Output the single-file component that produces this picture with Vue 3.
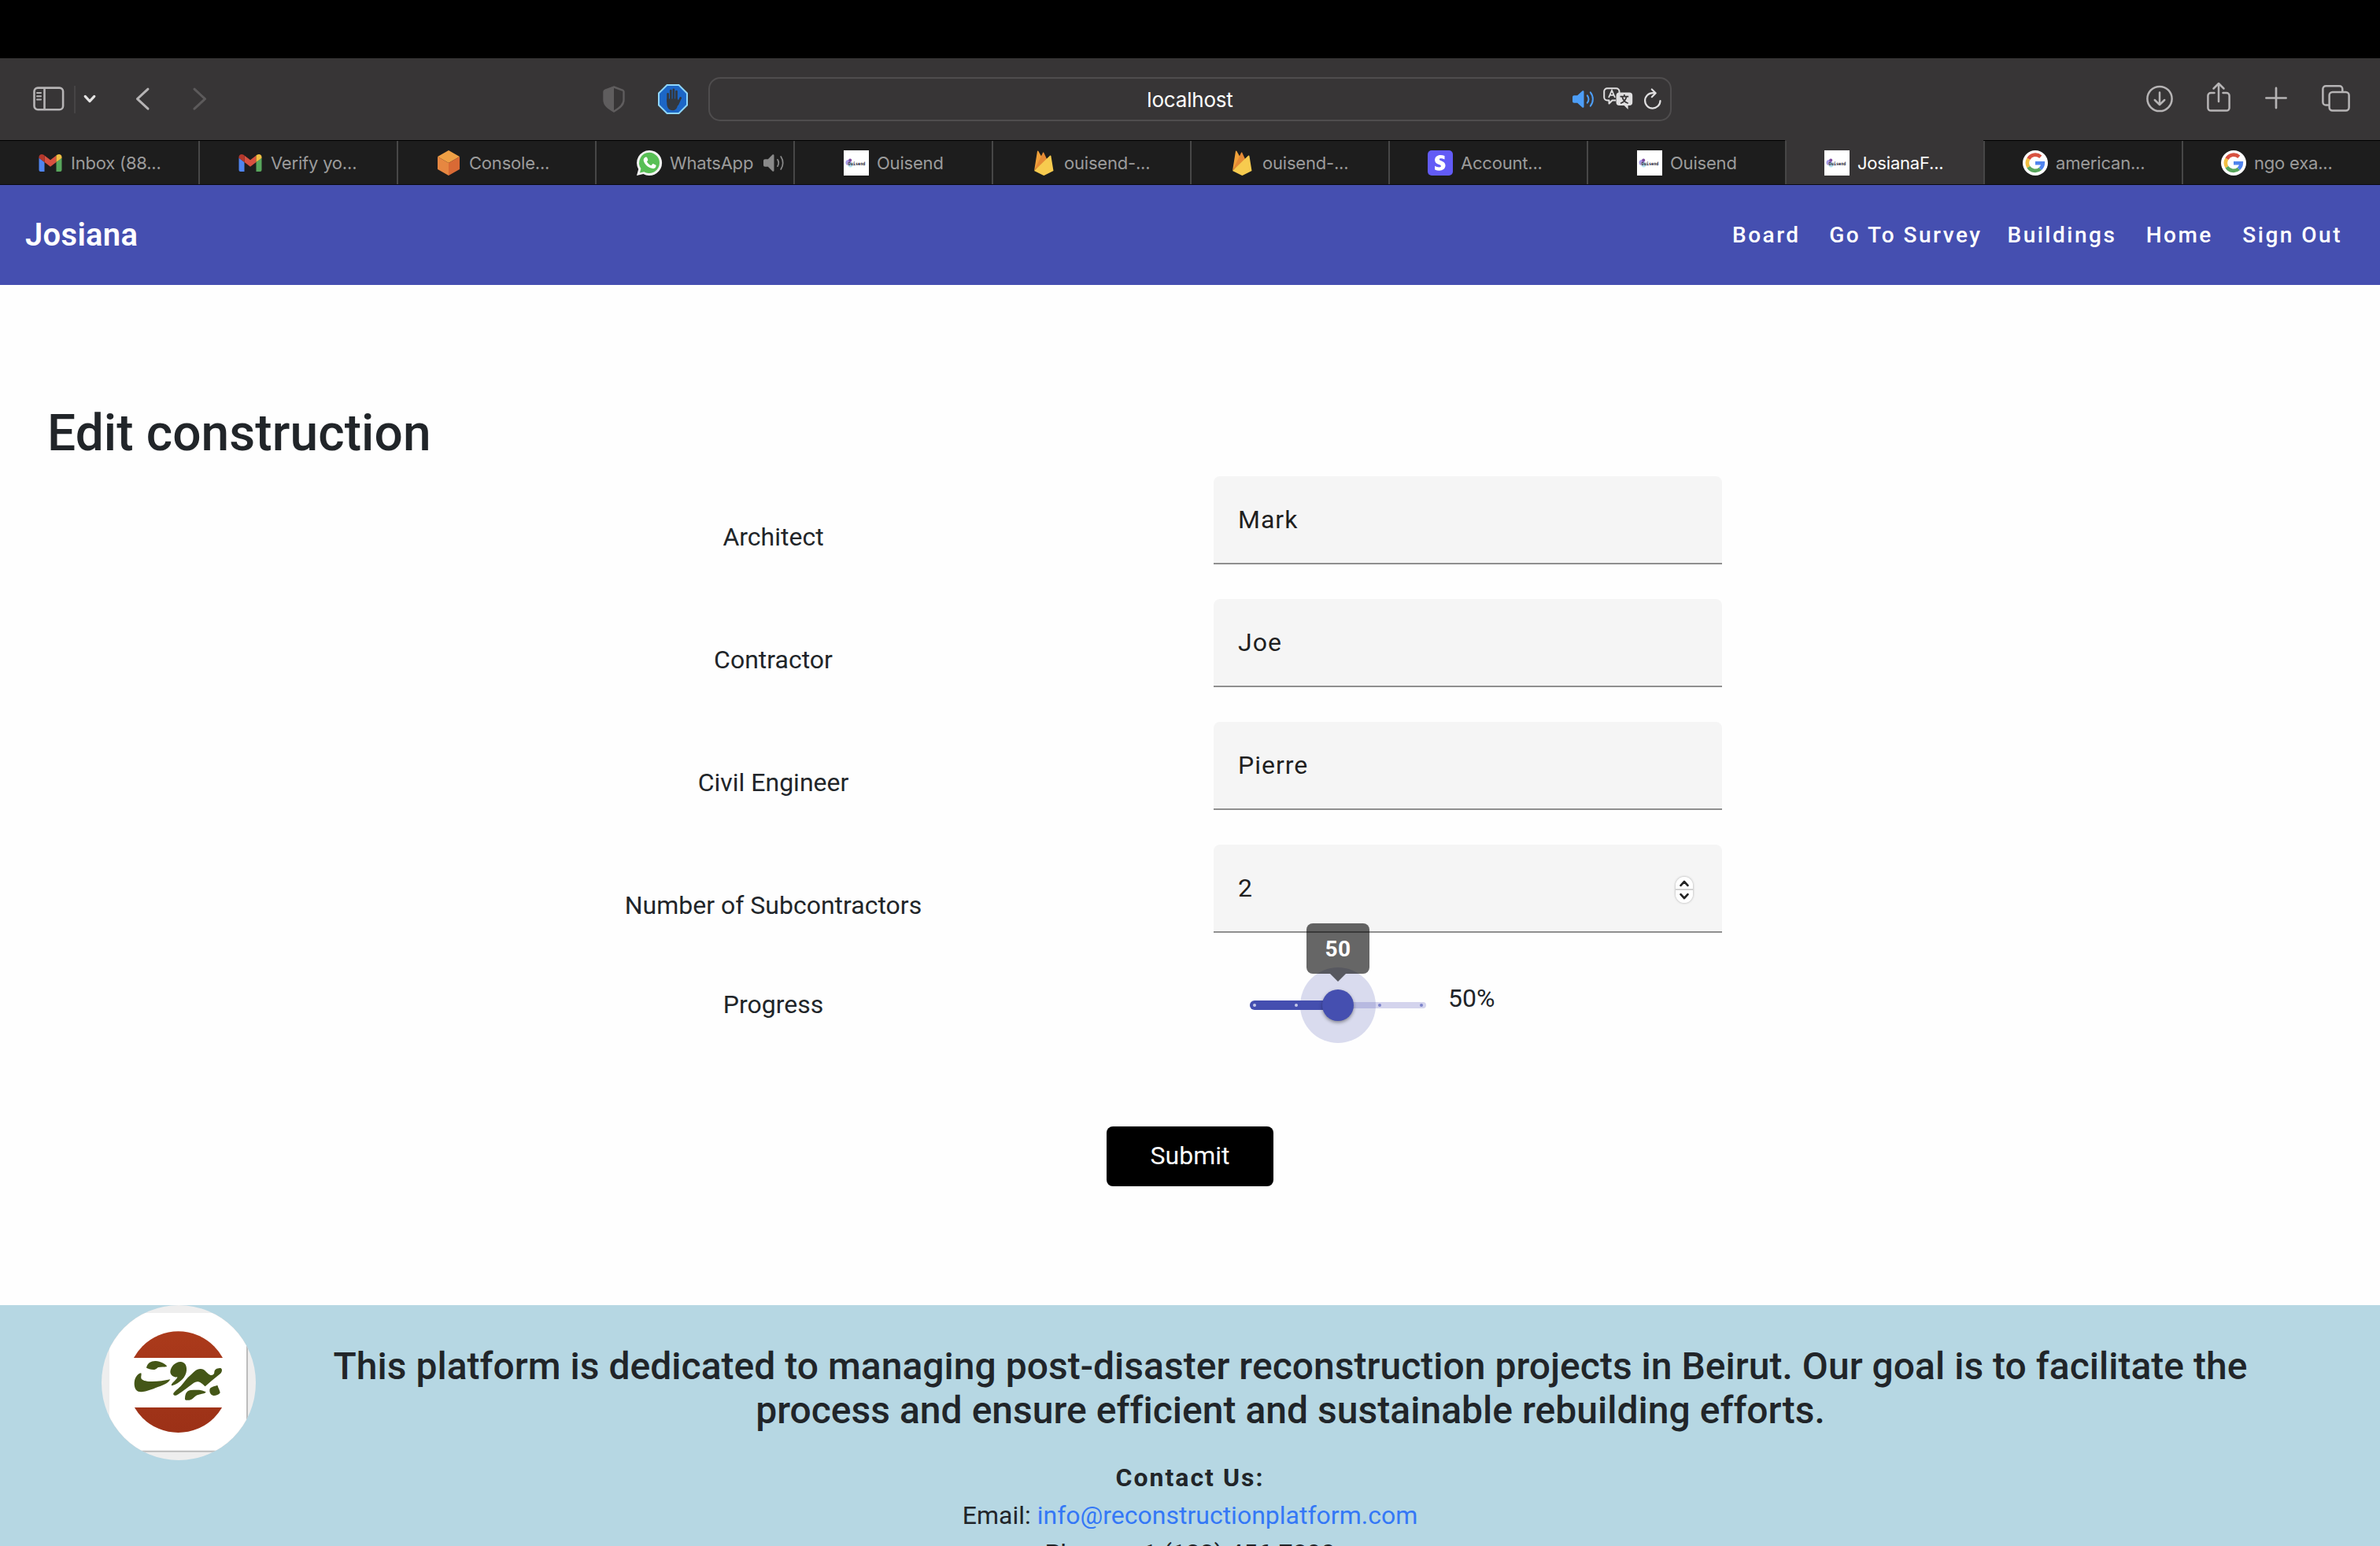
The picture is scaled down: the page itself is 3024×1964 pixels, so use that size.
<script setup>
const tabs = [
  { icon: 'gmail', label: 'Inbox (88...', inset: 48 },
  { icon: 'gmail', label: 'Verify yo...', inset: 50 },
  { icon: 'cube', label: 'Console...', inset: 50 },
  { icon: 'whatsapp', label: 'WhatsApp', inset: 53, audio: true },
  { icon: 'ouisend', label: 'Ouisend', inset: 64 },
  { icon: 'firebase', label: 'ouisend-...', inset: 50 },
  { icon: 'firebase', label: 'ouisend-...', inset: 50 },
  { icon: 'stripe', label: 'Account...', inset: 50 },
  { icon: 'ouisend', label: 'Ouisend', inset: 64 },
  { icon: 'ouisend', label: 'JosianaF...', inset: 50, active: true },
  { icon: 'google', label: 'american...', inset: 50 },
  { icon: 'google', label: 'ngo exa...', inset: 50 },
]

const links = ['Board', 'Go To Survey', 'Buildings', 'Home', 'Sign Out']

const fields = [
  { label: 'Architect', value: 'Mark' },
  { label: 'Contractor', value: 'Joe' },
  { label: 'Civil Engineer', value: 'Pierre' },
  { label: 'Number of Subcontractors', value: '2', stepper: true },
]

const progress = 50
</script>

<template>
  <div class="screen">
    <div class="notch"></div>

    <div class="toolbar">
      <div class="tools-left">
        <svg class="i-sidebar" width="40" height="32" viewBox="0 0 40 32" fill="none" stroke="#b6b4b5" stroke-width="2.6">
          <rect x="1.5" y="1.6" width="36.6" height="27.6" rx="4.5" />
          <path d="M14.5 2v27" />
          <path d="M5 8h5M5 12.3h5M5 16.6h5" stroke-width="2" stroke-linecap="round" />
        </svg>
        <span class="divider"></span>
        <svg class="i-menu" width="16" height="12" viewBox="0 0 16 12" fill="none" stroke="#e4e3e3" stroke-width="3.2" stroke-linecap="round" stroke-linejoin="round"><path d="M2.2 2.4 8 8.6l5.800-6.200" /></svg>
        <svg class="i-back" width="18" height="30" viewBox="0 0 18 30" fill="none" stroke="#b6b4b5" stroke-width="3" stroke-linecap="round" stroke-linejoin="round"><path d="M16 2.200 2.500 14.700 16 27.200" /></svg>
        <svg class="i-forward" width="18" height="30" viewBox="0 0 18 30" fill="none" stroke="#5c5a5b" stroke-width="3" stroke-linecap="round" stroke-linejoin="round"><path d="M2 2.200 15.500 14.700 2 27.200" /></svg>
        <svg class="i-shield" width="28" height="34" viewBox="0 0 28 34">
          <path d="M14 1.500 25 5.500c1 .4 1.500 1 1.500 2V18c0 6.500-5.500 10.500-12.500 14.500C7 28.500 1.500 24.500 1.500 18V7.500c0-1 .5-1.600 1.500-2z" fill="none" stroke="#5f5d5e" stroke-width="2.400" />
          <path d="M14 1.500V32.500C7 28.500 1.500 24.500 1.500 18V7.500c0-1 .5-1.600 1.500-2z" fill="#5f5d5e" />
        </svg>
        <svg class="i-hand" width="38" height="38" viewBox="0 0 38 38">
          <path d="M11.500 1h15L37 11.500v15L26.500 37h-15L1 26.500v-15z" fill="#1c66c6" stroke="#8ed6fb" stroke-width="2" />
          <g stroke="#33383f" stroke-linecap="round" stroke-width="2.700" fill="none">
            <path d="M12.600 22V12.300M16.300 20V8M19.900 20V6.800M23.500 22V9M25 25.500l3.700-8" />
          </g>
          <path d="M11.300 18.500h13.500l1.500 2.500c-.5 2.500-.9 5.500-1.800 7.800-1 2.900-2.900 4.500-5.700 4.500-5 0-7.500-4-7.500-9.300z" fill="#33383f" />
        </svg>
      </div>

      <div class="address">
        <span class="host">localhost</span>
        <div class="address-icons">
          <svg width="30" height="24" viewBox="0 0 30 24">
            <path d="M0 9.500C0 8 .8 7.300 2 7.300h4.200L12.500 1.600c.9-.8 2-.4 2 .8v19.200c0 1.200-1.100 1.600-2 .8L6.200 16.700H2c-1.200 0-2-.7-2-2.200z" fill="#4d9ef7" />
            <path d="M18.800 7.300a8 8 0 0 1 0 9.400M22.800 3.300a14 14 0 0 1 0 17.400" fill="none" stroke="#4d9ef7" stroke-width="2" stroke-linecap="round" />
          </svg>
          <svg class="i-translate" width="38" height="30" viewBox="0 0 38 30">
            <path d="M16 16.500H11.500L7.500 20.500V16.500H5A4 4 0 0 1 1.200 12.500V5.200A4 4 0 0 1 5.200 1.200H16.500A4 4 0 0 1 20.500 5.200V7" fill="none" stroke="#e0dfe0" stroke-width="2" stroke-linejoin="round" />
            <path d="M7 13 11 3.800 15 13M8.400 9.800h5.200" fill="none" stroke="#e0dfe0" stroke-width="1.800" />
            <path d="M20.500 6.600h12.700a4 4 0 0 1 4 4v8.400a4 4 0 0 1-4 4h-1.600v5l-5-5h-6.100a4 4 0 0 1-4-4v-8.400a4 4 0 0 1 4-4z" fill="#e0dfe0" />
            <path d="M26.800 8.900v2.500M21.500 11.700h10.700M29.500 12c-.8 3.600-3.500 7-7.500 8.300M24.200 12c.8 3.600 3.500 7 7.500 8.300" fill="none" stroke="#373536" stroke-width="1.700" />
          </svg>
          <svg class="i-reload" width="24" height="28" viewBox="0 0 24 28" fill="none" stroke="#e0dfe0" stroke-width="2.200" stroke-linecap="round" stroke-linejoin="round">
            <path d="M21.500 16A9.700 9.700 0 1 1 11.800 6.200h3.400M10.800 1.500l4.900 4.700-4.900 5" />
          </svg>
        </div>
      </div>

      <div class="tools-right">
        <svg width="34" height="38" viewBox="0 0 34 38" fill="none" stroke="#b6b4b5" stroke-width="2.500" stroke-linecap="round" stroke-linejoin="round">
          <circle cx="17" cy="18.500" r="15.600" /><path d="M17 10.500v15.500M10.800 20l6.200 6.200 6.200-6.200" />
        </svg>
        <svg class="i-share" width="30" height="38" viewBox="0 0 30 38" fill="none" stroke="#b6b4b5" stroke-width="2.500" stroke-linecap="round" stroke-linejoin="round">
          <path d="M9.500 11H5a3.600 3.600 0 0 0-3.600 3.600V30a3.600 3.600 0 0 0 3.600 3.600H25A3.600 3.600 0 0 0 28.600 30V14.600A3.600 3.600 0 0 0 25 11h-4.500M15 22V-1M8.500 5.500 15-1l6.500 6.500" />
        </svg>
        <svg class="i-plus" width="28" height="38" viewBox="0 0 28 38" fill="none" stroke="#b6b4b5" stroke-width="2.700" stroke-linecap="round"><path d="M1.400 17.500h25.200M14 4.900v25.200" /></svg>
        <svg class="i-tabs" width="36" height="38" viewBox="0 0 36 38" fill="none" stroke="#b6b4b5" stroke-width="2.500" stroke-linejoin="round">
          <rect x="9.600" y="10" width="25" height="23.600" rx="4" />
          <path d="M9.500 26.500H5.200A3.800 3.800 0 0 1 1.400 22.700V6A3.800 3.800 0 0 1 5.200 2.200H22.500A3.800 3.800 0 0 1 26.300 6V10" />
        </svg>
      </div>
    </div>

    <div class="tabs">
      <div v-for="(tab, i) in tabs" :key="i" class="tab" :class="{ active: tab.active }" :style="{ paddingLeft: tab.inset + 'px' }">
        <svg v-if="tab.icon === 'gmail'" width="32" height="32" viewBox="0 0 32 32">
          <path d="M1.500 9.500 8.500 15v12H3.500a2 2 0 0 1-2-2z" fill="#5084ee" />
          <path d="M30.500 9.500 23.500 15v12h5a2 2 0 0 0 2-2z" fill="#58a65c" />
          <path d="M8.500 6.500 16 12.300l7.500-5.800V15L16 20.800 8.500 15z" fill="#d85140" />
          <path d="M1.500 8.500C1.500 5 5.200 4 7.600 5.800l.9.700V15l-7-5.300z" fill="#b4382c" />
          <path d="M30.500 8.500c0-3.500-3.700-4.500-6.100-2.700l-.9.700V15l7-5.300z" fill="#f1bf42" />
        </svg>
        <svg v-else-if="tab.icon === 'cube'" width="32" height="32" viewBox="0 0 32 32">
          <path d="M16 0 30 8 16 16 2 8z" fill="#efa045" /><path d="M2 8l14 8v16L2 24z" fill="#e68741" /><path d="M30 8 16 16v16l14-8z" fill="#d96a35" />
        </svg>
        <svg v-else-if="tab.icon === 'whatsapp'" width="32" height="32" viewBox="0 0 32 32">
          <path d="M16 0a16 16 0 1 1-7.600 30L0 32l2.200-8A16 16 0 0 1 16 0z" fill="#f3f3f3" />
          <path d="M16 2.800a13.100 13.100 0 1 1-6.700 24.400L4 28.500l1.400-5.200A13.100 13.100 0 0 1 16 2.800z" fill="#58bf55" />
          <path d="M11.400 8.500c.8-.3 1.500 0 1.800.8l1 2.500c.2.600-.1 1.200-1.300 2.500 1.300 2.400 3 4 5.500 5l1.600-1.800c.4-.4.800-.5 1.300-.3l2.700 1.300c.7.400.7.900.4 1.900-.6 1.900-2.300 2.900-4.200 2.700-5.800-1-10.300-5.300-11.500-10-.3-2 .8-4 2.700-4.600z" fill="#fff" />
        </svg>
        <svg v-else-if="tab.icon === 'ouisend'" width="32" height="32" viewBox="0 0 32 32">
          <path d="M0 0h32v32H0z" fill="#fff" />
          <circle cx="6" cy="15.500" r="3.500" fill="#a79be6" /><circle cx="8.200" cy="12.500" r="2" fill="#7d4a9e" /><circle cx="8.500" cy="18.500" r="3" fill="#b4e0ee" />
          <text x="5.500" y="18.800" font-family="DejaVu Sans Mono, monospace" font-size="6" font-weight="700" textLength="22" lengthAdjust="spacingAndGlyphs" fill="#2b2838">Ouisend</text>
        </svg>
        <svg v-else-if="tab.icon === 'firebase'" width="32" height="32" viewBox="0 0 32 32">
          <path d="M4 26 8 1c.2-.8 1-.8 1.400-.1l4.500 8.200z" fill="#f0a13a" />
          <path d="M4 26 15 3c.3-.6 1-.6 1.300 0l4.200 9z" fill="#e58a35" />
          <path d="M4 26 24 6.700c.6-.6 1.300-.3 1.400.4L28.500 26 17.500 31.600a2.500 2.500 0 0 1-2.400 0z" fill="#f7cb4f" />
        </svg>
        <svg v-else-if="tab.icon === 'stripe'" width="32" height="32" viewBox="0 0 32 32">
          <rect width="32" height="32" rx="5" fill="#625bf6" />
          <path d="M21.500 7v4.500c-1.800-.9-3.400-1.300-4.800-1.300-1.200 0-1.900.3-1.900 1.200 0 2.400 7.700 1.400 7.700 7.700 0 4.200-3.200 6.600-7.700 6.600-2 0-4-.4-5.700-1.200v-4.700c1.600.9 3.700 1.600 5.600 1.600 1.300 0 2.200-.3 2.200-1.400 0-2.700-7.800-1.600-7.800-7.700 0-4 3-6.300 7.300-6.300 1.800 0 3.600.3 5.100 1z" fill="#fff" />
        </svg>
        <svg v-else width="32" height="32" viewBox="0 0 32 32">
          <circle cx="16" cy="16" r="16" fill="#fff" />
          <g fill="none" stroke-width="4.600">
            <path d="M22.800 8.200A10 10 0 0 0 7.400 10.800" stroke="#d85140" />
            <path d="M7.400 10.800a10 10 0 0 0 0 10.400" stroke="#f1bf42" />
            <path d="M7.400 21.200A10 10 0 0 0 22.400 23.500" stroke="#58a65c" />
            <path d="M22.400 23.500A10 10 0 0 0 25.800 16.300H16" stroke="#5084ee" />
          </g>
        </svg>
        <span class="tab-label">{{ tab.label }}</span>
        <svg v-if="tab.audio" class="tab-audio" width="28" height="24" viewBox="0 0 28 24">
          <path d="M0 9.500C0 8 .8 7.300 2 7.300h3.800L11.500 1.600c.9-.8 2-.4 2 .8v19.200c0 1.200-1.100 1.600-2 .8L5.800 16.700H2c-1.200 0-2-.7-2-2.200z" fill="#8a8a8a" />
          <path d="M18 7.800a8 8 0 0 1 0 8.400M22.200 4a14 14 0 0 1 0 16" fill="none" stroke="#8a8a8a" stroke-width="1.700" stroke-linecap="round" />
        </svg>
      </div>
    </div>

    <header class="navbar">
      <span class="brand">Josiana</span>
      <nav class="nav">
        <a v-for="link in links" :key="link" class="nav-link">{{ link }}</a>
      </nav>
    </header>

    <main class="content">
      <h1 class="title">Edit construction</h1>

      <form class="form">
        <div v-for="field in fields" :key="field.label" class="row">
          <label class="row-label">{{ field.label }}</label>
          <div class="input">
            <span>{{ field.value }}</span>
            <div v-if="field.stepper" class="stepper">
              <svg width="22" height="16" viewBox="0 0 22 16" fill="none" stroke="#242424" stroke-width="2.700" stroke-linecap="round" stroke-linejoin="round"><path d="M6.500 10.800 11 6l4.500 4.800" /></svg>
              <svg width="22" height="16" viewBox="0 0 22 16" fill="none" stroke="#242424" stroke-width="2.700" stroke-linecap="round" stroke-linejoin="round"><path d="M6.500 5.200 11 10l4.500-4.800" /></svg>
            </div>
          </div>
        </div>

        <div class="row progress-row">
          <label class="row-label">Progress</label>
          <div class="progress">
            <div class="slider">
              <div class="track"></div>
              <div class="track-active" :style="{ width: progress + '%' }"></div>
              <div class="ticks"><i></i><i></i><i class="hidden"></i><i class="off"></i><i class="off"></i></div>
              <div class="handle" :style="{ left: progress + '%' }">
                <div class="halo"></div>
                <div class="thumb"></div>
                <div class="bubble">{{ progress }}</div>
              </div>
            </div>
            <span class="percent">{{ progress }}%</span>
          </div>
        </div>
      </form>

      <button class="submit">Submit</button>
    </main>

    <footer class="footer">
      <div class="about">
        <svg class="logo" width="196" height="197" viewBox="87 54 588 591">
          <defs>
            <clipPath id="disc"><ellipse cx="381" cy="349.500" rx="294" ry="295.500" /></clipPath>
            <clipPath id="bands"><path d="M150 100h460v155H150zM150 444h460v150H150z" /></clipPath>
            <linearGradient id="rust" x1="0" y1="0" x2="0" y2="1"><stop offset="0" stop-color="#ab3a1b" /><stop offset="1" stop-color="#9c3117" /></linearGradient>
          </defs>
          <g clip-path="url(#disc)">
            <path d="M87 54h588v591H87z" fill="#eeeeee" />
            <path d="M117 84h528v530H117z" fill="#bdbdbd" />
            <path d="M117 84h522v524H117z" fill="#fff" />
            <circle cx="379.500" cy="347" r="193" fill="url(#rust)" clip-path="url(#bands)" />
            <g fill="#445617">
              <path d="M258 293C262 274 277 266 294 267C312 268 329 277 337 287C327 291 312 288 303 291C297 294 295 300 285 300C273 300 265 295 258 293Z" />
              <path d="M238 313C241 320 235 328 239 335C254 351 311 345 349 337C342 352 318 361 292 370C270 379 243 388 227 383C213 378 210 357 213 342C216 329 226 313 238 313Z" />
              <path d="M349 308C350 290 367 270 388 270C405 270 413 285 411 304C409 329 385 352 356 361C349 358 358 350 364 344C371 337 377 332 376 328C365 330 349 322 349 308Z" />
              <path d="M361 390C366 382 382 370 392 359C403 347 413 331 426 321C440 309 447 298 464 297C484 297 489 318 503 321C514 321 517 315 517 308C519 296 531 294 541 294C548 296 547 308 541 314L506 343L482 364C475 358 468 349 456 346C445 343 436 353 427 359C411 370 388 389 374 397C367 401 359 397 361 390Z" />
              <path d="M405 413C405 394 410 381 426 378C446 378 464 374 485 385C481 394 463 391 452 397C440 403 434 415 422 416C414 417 407 417 405 413Z" />
              <path d="M499 377C500 366 512 365 529 359C531 368 540 383 539 388C534 396 524 399 515 399C506 398 498 389 499 377Z" />
            </g>
          </g>
        </svg>
        <h2 class="mission">This platform is dedicated to managing post-disaster reconstruction projects in Beirut. Our goal is to facilitate the<br />process and ensure efficient and sustainable rebuilding efforts.</h2>
      </div>
      <div class="contact">
        <p class="contact-title">Contact Us:</p>
        <p>Email: <a class="mail">info@reconstructionplatform.com</a></p>
        <p>Phone: +1 (123) 456-7890</p>
      </div>
    </footer>
  </div>
</template>

<style>
html,
body {
  margin: 0;
  background: #fff;
  overflow: hidden;
}
</style>

<style scoped>
.screen {
  width: 3024px;
  height: 1964px;
  overflow: hidden;
  display: flex;
  flex-direction: column;
  background: #fefefe;
  color: #212529;
  font-family: Roboto, 'Liberation Sans', sans-serif;
  font-size: 32px;
  line-height: 48px;
}
.screen svg {
  display: block;
  flex: none;
  overflow: visible;
}
.notch {
  height: 74px;
  flex: none;
  background: #000;
}

/* Browser toolbar */
.toolbar {
  height: 104px;
  flex: none;
  display: grid;
  grid-template-columns: 900px 1224px 900px;
  align-items: center;
  background: #373536;
}
.tools-left,
.tools-right {
  display: flex;
  align-items: center;
}
.tools-left {
  padding-left: 42px;
}
.divider {
  width: 2px;
  height: 35px;
  margin: 0 10px 0 12px;
  background: #464445;
}
.i-back {
  margin-left: 50px;
}
.i-forward {
  margin-left: 55px;
}
.i-shield {
  margin-left: auto;
}
.i-hand {
  margin: 0 26px 0 42px;
}
.address {
  box-sizing: border-box;
  height: 56px;
  border: 2px solid #4f4d4e;
  border-radius: 15px;
  display: grid;
  grid-template-columns: 1fr auto 1fr;
  align-items: center;
}
.host {
  grid-column: 2;
  padding-top: 2px;
  font: 400 26px/50px Inter, 'Liberation Sans', sans-serif;
  letter-spacing: -0.2px;
  color: #fff;
}
.address-icons {
  display: flex;
  align-items: center;
  justify-content: flex-end;
  padding-right: 10px;
}
.i-translate {
  margin-left: 9px;
}
.i-reload {
  margin-left: 13px;
}
.tools-right {
  justify-content: flex-end;
  padding-right: 38px;
}
.i-share {
  margin-left: 43px;
}
.i-plus {
  margin-left: 44px;
}
.i-tabs {
  margin-left: 44px;
}

/* Tab strip */
.tabs {
  height: 57px;
  flex: none;
  box-sizing: border-box;
  display: flex;
  background: #1d1d1d;
  border-bottom: 1px solid #0a0a12;
}
.tab {
  width: 252px;
  box-sizing: border-box;
  display: flex;
  align-items: center;
  padding-top: 1px;
  border-top: 1px solid #000;
  box-shadow: inset 2px 0 0 #474747;
}
.tab:first-child {
  box-shadow: none;
}
.tab.active {
  background: #373536;
  border-top-color: #373536;
}
.tab-label {
  margin-left: 10px;
  font: 400 22px/32px Inter, 'Liberation Sans', sans-serif;
  letter-spacing: -0.2px;
  color: #9b9b9b;
  white-space: nowrap;
}
.tab.active .tab-label {
  color: #fff;
}
.tab-audio {
  margin-left: 13px;
}

/* App bar */
.navbar {
  height: 127px;
  flex: none;
  box-sizing: border-box;
  display: flex;
  align-items: center;
  justify-content: space-between;
  padding: 0 32px;
  background: #454fb0;
  color: #fff;
}
.brand {
  font-size: 40px;
  font-weight: 600;
  letter-spacing: 0.3px;
}
.nav {
  display: flex;
}
.nav-link {
  box-sizing: border-box;
  min-width: 128px;
  padding: 0 16px;
  text-align: center;
  font-size: 28px;
  font-weight: 500;
  letter-spacing: 2.5px;
}

/* Form */
.content {
  height: 1296px;
  flex: none;
  box-sizing: border-box;
  padding-top: 151px;
}
.title {
  margin: 0 0 16px 60px;
  font-size: 64px;
  line-height: 76px;
  font-weight: 500;
  letter-spacing: 0.1px;
}
.form {
  margin-left: 422px;
}
.row {
  display: grid;
  grid-template-columns: 1120px 646px;
  align-items: start;
  height: 156px;
}
.row-label {
  padding: 53px 0 0 1px;
  text-align: center;
}
.input {
  box-sizing: border-box;
  height: 112px;
  padding: 0 37px 0 31px;
  display: flex;
  align-items: center;
  justify-content: space-between;
  background: #f5f5f5;
  border-bottom: 2px solid #8f8f8f;
  border-radius: 8px 8px 0 0;
  letter-spacing: 1px;
  color: #1f1f1f;
}
.stepper {
  width: 22px;
  height: 33px;
  margin-top: 4px;
  display: flex;
  flex-direction: column;
  justify-content: space-between;
  border-radius: 11px;
  background: linear-gradient(#fff 15px, #d2d2d2 15px, #d2d2d2 17px, #fff 17px);
  box-shadow: 0 0 3px rgba(0, 0, 0, 0.35);
}
.progress-row {
  height: 96px;
}
.progress-row .row-label {
  padding-top: 23px;
}
.progress {
  display: flex;
  padding-left: 46px;
}
.slider {
  position: relative;
  width: 224px;
  height: 96px;
  display: flex;
  align-items: center;
}
.track {
  width: 100%;
  height: 8px;
  border-radius: 4px;
  background: #d4d4ed;
}
.track-active {
  position: absolute;
  left: 0;
  top: 42px;
  height: 12px;
  border-radius: 6px;
  background: #454fb0;
}
.ticks {
  position: absolute;
  inset: 46px 4px;
  display: flex;
  justify-content: space-between;
}
.ticks i {
  width: 4px;
  height: 4px;
  border-radius: 2px;
  background: #c5c8e8;
}
.ticks .off {
  background: #7d84ca;
}
.ticks .hidden {
  visibility: hidden;
}
.handle {
  position: absolute;
  top: 48px;
}
.halo {
  position: absolute;
  left: -48px;
  top: -48px;
  width: 96px;
  height: 96px;
  border-radius: 50%;
  background: rgba(69, 79, 176, 0.2);
}
.thumb {
  position: absolute;
  left: -20px;
  top: -20px;
  width: 40px;
  height: 40px;
  border-radius: 50%;
  background: #454fb0;
  box-shadow: 0 2px 4px rgba(0, 0, 0, 0.4);
}
.bubble {
  position: absolute;
  left: -40px;
  top: -104px;
  width: 80px;
  height: 64px;
  border-radius: 8px;
  background: rgba(0, 0, 0, 0.6);
  color: #fff;
  font-size: 28px;
  font-weight: 700;
  line-height: 65px;
  text-align: center;
  letter-spacing: 0.4px;
}
.bubble::after {
  content: '';
  position: absolute;
  left: 30px;
  top: 64px;
  border: 10px solid transparent;
  border-bottom: 0;
  border-top-color: rgba(0, 0, 0, 0.6);
}
.percent {
  margin: 15px 0 0 28px;
}
.submit {
  display: block;
  width: 212px;
  height: 76px;
  margin: 106px auto 0;
  padding: 0 0 2px;
  border: 0;
  border-radius: 8px;
  background: #000;
  color: #fff;
  font: inherit;
}

/* Footer */
.footer {
  flex: none;
  height: 306px;
  overflow: hidden;
  background: #b6d7e3;
}
.about {
  display: flex;
  height: 195px;
  padding: 0 70px 0 129px;
}
.mission {
  flex: 1;
  margin: 50px 0 0;
  font-size: 48px;
  line-height: 56px;
  font-weight: 500;
  letter-spacing: 0.02px;
  text-align: center;
  white-space: nowrap;
}
.contact {
  text-align: center;
}
.contact p {
  margin: 0;
}
.contact .contact-title {
  font-weight: 700;
  letter-spacing: 2px;
}
.mail {
  color: #3478f6;
}
</style>
